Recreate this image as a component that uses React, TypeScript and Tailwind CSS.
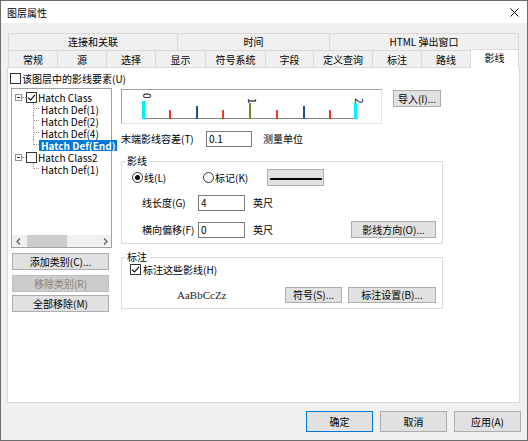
import React from "react";

const Btn = ({
  children,
  className = "",
  disabled = false,
}: {
  children: React.ReactNode;
  className?: string;
  disabled?: boolean;
}) => (
  <div
    className={`flex items-center justify-center border shrink-0 ${
      disabled
        ? "border-[#bfbfbf] bg-[#cccccc] text-[#838383]"
        : "border-[#adadad] bg-[#e1e1e1] text-black"
    } ${className}`}
  >
    {children}
  </div>
);

const Check = ({ checked, className = "" }: { checked?: boolean; className?: string }) => (
  <div className={`flex items-center justify-center border border-[#333333] bg-white shrink-0 ${className}`}>
    {checked && (
      <svg width="9" height="9" viewBox="0 0 9 9">
        <path d="M1 4.6 L3.5 7 L8 1.8" fill="none" stroke="#000" strokeWidth="1.1" />
      </svg>
    )}
  </div>
);

const Radio = ({ on }: { on?: boolean }) => (
  <div className="w-[11px] h-[11px] rounded-full border border-[#333333] bg-white flex items-center justify-center shrink-0">
    {on && <div className="w-[5px] h-[5px] rounded-full bg-black" />}
  </div>
);

const Expander = () => (
  <div className="w-[7px] h-[7px] border border-[#919191] bg-white flex items-center justify-center shrink-0">
    <div className="w-[3px] h-px bg-[#333333]" />
  </div>
);

const RootRow = ({ label, checked }: { label: string; checked?: boolean }) => (
  <div className="flex items-center h-[12px] pl-[3px]">
    <Expander />
    <div className="w-[4px] border-t border-dotted border-[#a0a0a0]" />
    <Check checked={checked} className="w-[11px] h-[11px]" />
    <span className="ml-[1px] whitespace-nowrap leading-[11px]">{label}</span>
  </div>
);

const ChildRow = ({
  label,
  last,
  selected,
}: {
  label: string;
  last?: boolean;
  selected?: boolean;
}) => (
  <div className="flex items-center h-[12px] pl-[21px]">
    <div className="relative w-[6px] h-[12px] shrink-0">
      {!last && <div className="absolute left-0 top-0 h-[12px] border-l border-dotted border-[#a0a0a0]" />}
      <div className="absolute left-0 top-0 h-[6px] w-[6px] border-l border-b border-dotted border-[#a0a0a0]" />
    </div>
    <span
      className={`px-[2px] h-[11px] leading-[11px] flex items-center whitespace-nowrap ${
        selected ? "bg-[#0078d7] text-white font-bold" : ""
      }`}
    >
      {label}
    </span>
  </div>
);

const row1: [string, string][] = [
  ["连接和关联", "w-[169px]"],
  ["时间", "w-[152px]"],
  ["HTML 弹出窗口", "w-[190px] border-r"],
];

const row2: [string, string][] = [
  ["常规", "w-[49px]"],
  ["源", "w-[49px]"],
  ["选择", "w-[49px]"],
  ["显示", "w-[50px]"],
  ["符号系统", "w-[60px]"],
  ["字段", "w-[48px]"],
  ["定义查询", "w-[59px]"],
  ["标注", "w-[49px]"],
  ["路线", "w-[49px]"],
];

const Preview = () => (
  <div className="w-[261px] h-[35px] border-t border-l border-[#a0a0a0] border-r border-b border-r-[#e3e3e3] border-b-[#e3e3e3] bg-white shrink-0">
    <svg width="259" height="33" viewBox="0 0 259 33">
      <line x1="22" y1="28.5" x2="236" y2="28.5" stroke="#808080" strokeWidth="1" />
      <rect x="20" y="11" width="3.5" height="18" fill="#00f0ff" />
      <rect x="47" y="20" width="2" height="9" fill="#ee3a2a" />
      <rect x="74" y="16" width="2" height="13" fill="#1f4e9e" />
      <rect x="100" y="20" width="2" height="9" fill="#ee3a2a" />
      <rect x="127" y="13" width="2" height="16" fill="#6f8a2c" />
      <rect x="154" y="20" width="2" height="9" fill="#ee3a2a" />
      <rect x="181" y="16" width="2" height="13" fill="#1f4e9e" />
      <rect x="207" y="20" width="2" height="9" fill="#ee3a2a" />
      <rect x="232" y="13" width="3.5" height="16" fill="#00f0ff" />
      <text
        transform="translate(21,3) rotate(90)"
        fontSize="10"
        fontFamily="'Noto Sans CJK SC', sans-serif"
        fill="#000"
      >
        0
      </text>
      <text
        transform="translate(126,8) rotate(90)"
        fontSize="10"
        fontFamily="'Noto Sans CJK SC', sans-serif"
        fill="#000"
      >
        1
      </text>
      <text
        transform="translate(233,8) rotate(90)"
        fontSize="10"
        fontFamily="'Noto Sans CJK SC', sans-serif"
        fill="#000"
      >
        2
      </text>
    </svg>
  </div>
);

export default function App() {
  return (
    <div className="w-[528px] h-[441px] border border-[#6d6d6d] bg-[#f0f0f0] flex flex-col text-[10px] leading-[12px] text-black font-['Noto_Sans_CJK_SC',sans-serif] overflow-hidden">
      {/* Title bar */}
      <div className="h-[22px] bg-white flex items-center pl-[6px] pr-[8px] shrink-0">
        <span className="pt-[2px]">图层属性</span>
        <svg className="ml-auto" width="9" height="9" viewBox="0 0 9 9">
          <path d="M0.5 0.5L8.5 8.5M8.5 0.5L0.5 8.5" stroke="#000" strokeWidth="1" />
        </svg>
      </div>

      {/* Tabs */}
      <div className="mt-[10px] ml-[7px] flex flex-col shrink-0">
        <div className="flex h-[17px]">
          {row1.map(([t, w]) => (
            <div key={t} className={`${w} h-[17px] border-t border-l border-[#d9d9d9] flex items-center justify-center`}>
              {t}
            </div>
          ))}
        </div>
        <div className="flex h-[17px] items-end">
          {row2.map(([t, w]) => (
            <div key={t} className={`${w} h-[17px] border-t border-l border-[#d9d9d9] flex items-center justify-center pt-[1px]`}>
              {t}
            </div>
          ))}
          <div className="relative z-10 w-[49px] h-[19px] -mb-px bg-white border-t border-l border-r border-[#d9d9d9] flex items-center justify-center pb-[2px]">
            影线
          </div>
        </div>
      </div>

      {/* Panel */}
      <div className="ml-[6px] w-[513px] h-[336px] bg-white border border-[#d9d9d9] flex flex-col shrink-0">
        <div className="flex items-center mt-[5px] ml-[2px] h-[11px]">
          <Check className="w-[11px] h-[11px]" />
          <span className="ml-[1px]">该图层中的影线要素(U)</span>
        </div>

        <div className="flex mt-[4px] ml-[3px]">
          {/* Left column */}
          <div className="w-[101px] flex flex-col shrink-0">
            <div className="h-[160px] border border-[#a0a0a0] bg-white flex flex-col">
              <div className="flex-1 pt-[2px] flex flex-col">
                <RootRow label="Hatch Class" checked />
                <ChildRow label="Hatch Def(1)" />
                <ChildRow label="Hatch Def(2)" />
                <ChildRow label="Hatch Def(4)" />
                <ChildRow label="Hatch Def(End)" last selected />
                <RootRow label="Hatch Class2" />
                <ChildRow label="Hatch Def(1)" last />
              </div>
              <div className="h-[12px] bg-[#f0f0f0] flex items-center">
                <div className="w-[13px] h-[12px] flex items-center justify-center">
                  <svg width="5" height="7" viewBox="0 0 5 7">
                    <path d="M4 0.5 L1 3.5 L4 6.5" fill="none" stroke="#606060" strokeWidth="1.3" />
                  </svg>
                </div>
                <div className="ml-[2px] w-[40px] h-[12px] bg-[#cdcdcd]" />
                <div className="ml-auto w-[11px] h-[12px] flex items-center justify-center">
                  <svg width="5" height="7" viewBox="0 0 5 7">
                    <path d="M1 0.5 L4 3.5 L1 6.5" fill="none" stroke="#606060" strokeWidth="1.3" />
                  </svg>
                </div>
              </div>
            </div>
            <Btn className="mt-[5px] ml-[1px] w-[97px] h-[17px]">添加类别(C)...</Btn>
            <Btn disabled className="mt-[5px] ml-[1px] w-[97px] h-[17px]">
              移除类别(R)
            </Btn>
            <Btn className="mt-[3px] ml-[1px] w-[97px] h-[17px]">全部移除(M)</Btn>
          </div>

          {/* Right column */}
          <div className="ml-[9px] pt-[1px] w-[322px] flex flex-col">
            <div className="flex items-start">
              <Preview />
              <Btn className="ml-[11px] mt-[1px] w-[48px] h-[17px]">导入(I)...</Btn>
            </div>

            <div className="mt-[7px] flex items-center h-[16px]">
              <span className="w-[85px] shrink-0">末端影线容差(T)</span>
              <div className="w-[46px] h-[16px] border border-[#7a7a7a] bg-white flex items-center pl-[2px] shrink-0">0.1</div>
              <span className="ml-[11px]">测量单位</span>
            </div>

            {/* 影线 group */}
            <div className="relative mt-[14px] w-[322px] h-[83px] border border-[#dcdcdc] pt-[7px] pl-[10px] flex flex-col">
              <span className="absolute -top-[7px] left-[4px] bg-white px-[1px]">影线</span>
              <div className="flex items-center h-[17px]">
                <div className="w-[71px] flex items-center shrink-0">
                  <Radio on />
                  <span className="ml-[1px]">线(L)</span>
                </div>
                <div className="w-[64px] flex items-center shrink-0">
                  <Radio />
                  <span className="ml-[1px]">标记(K)</span>
                </div>
                <div className="w-[57px] h-[17px] border border-[#adadad] bg-[#e1e1e1] flex items-center justify-center shrink-0">
                  <div className="w-[52px] h-[2px] bg-black mt-[3px]" />
                </div>
              </div>
              <div className="mt-[9px] flex items-center h-[16px] pl-[10px]">
                <span className="w-[56px] shrink-0">线长度(G)</span>
                <div className="w-[47px] h-[16px] border border-[#7a7a7a] bg-white flex items-center pl-[2px] shrink-0">4</div>
                <span className="ml-[8px]">英尺</span>
              </div>
              <div className="mt-[11px] flex items-center h-[16px] pl-[10px]">
                <span className="w-[56px] shrink-0">横向偏移(F)</span>
                <div className="w-[47px] h-[16px] border border-[#7a7a7a] bg-white flex items-center pl-[2px] shrink-0">0</div>
                <span className="ml-[8px] w-[98px] shrink-0">英尺</span>
                <Btn className="w-[85px] h-[17px] -mt-[1px]">影线方向(O)...</Btn>
              </div>
            </div>

            {/* 标注 group */}
            <div className="relative mt-[13px] w-[322px] h-[52px] border border-[#dcdcdc] pt-[6px] pl-[8px] flex flex-col">
              <span className="absolute -top-[7px] left-[4px] bg-white px-[1px]">标注</span>
              <div className="flex items-center h-[11px]">
                <Check checked className="w-[11px] h-[11px]" />
                <span className="ml-[2px]">标注这些影线(H)</span>
              </div>
              <div className="mt-[12px] flex items-center h-[16px]">
                <span className="pl-[47px] w-[155px] shrink-0 text-[11px] font-['Liberation_Serif',serif] text-[#222222]">
                  AaBbCcZz
                </span>
                <Btn className="w-[57px] h-[16px]">符号(S)...</Btn>
                <Btn className="ml-[6px] w-[88px] h-[16px]">标注设置(B)...</Btn>
              </div>
            </div>
          </div>
        </div>
      </div>

      {/* Bottom buttons */}
      <div className="mt-[8px] flex justify-end pr-[6px] gap-[7px]">
        <div className="w-[67px] h-[21px] border border-[#0078d7] bg-[#e1e1e1] flex items-center justify-center">确定</div>
        <Btn className="w-[67px] h-[21px]">取消</Btn>
        <Btn className="w-[67px] h-[21px]">应用(A)</Btn>
      </div>
    </div>
  );
}
